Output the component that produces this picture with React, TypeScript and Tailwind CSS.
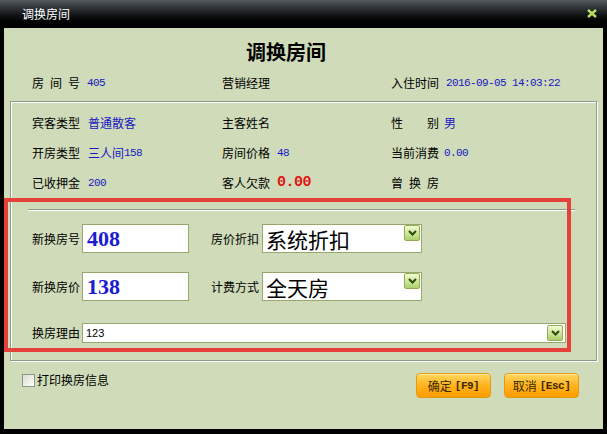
import React from "react";

const CJK = "font-['Noto_Sans_CJK_SC',sans-serif]";
const MONO = "font-['Liberation_Mono',monospace]";
const NUM = "font-['Liberation_Mono',monospace] text-[11px] tracking-[-0.6px] text-[#1717c4]";

function Spaced({ chars }: { chars: string[] }) {
  return (
    <span className="flex w-[48px] justify-between">
      {chars.map((c, i) => (
        <span key={i}>{c}</span>
      ))}
    </span>
  );
}

function DropBtn() {
  return (
    <div className="flex h-[16px] w-[16px] items-center justify-center rounded-[2px] border border-[#93ab5a] bg-gradient-to-b from-[#f3fbd0] to-[#aed067]">
      <svg width="9" height="6" viewBox="0 0 9 6">
        <path d="M1 1 L4.5 4.5 L8 1" stroke="#2c4a0c" strokeWidth="2" fill="none" />
      </svg>
    </div>
  );
}

function Btn({ zh, key2 }: { zh: string; key2: string }) {
  return (
    <div className="flex h-[25px] w-[75px] items-center justify-center rounded-[4px] border border-[#e69a10] bg-gradient-to-b from-[#ffd85a] via-[#ffb21c] to-[#ff9c00] shadow-[inset_0_1px_0_#ffe9a0]">
      <span className={`${CJK} text-[12px] leading-[14px] text-[#3a2a00]`}>{zh}</span>
      <span className={`${MONO} ml-[3px] text-[11px] font-bold leading-[14px] tracking-[-0.5px] text-[#3a2a00]`}>{key2}</span>
    </div>
  );
}

export default function App() {
  return (
    <div className={`relative flex h-[434px] w-[607px] flex-col bg-black ${CJK} text-[12px] text-black`}>
      {/* title bar */}
      <div className="flex h-[28px] items-center justify-between bg-gradient-to-b from-[#555b60] via-[#16191c] to-black pl-[22px] pr-[10px]">
        <span className="text-[12px] leading-[14px] text-white">调换房间</span>
        <svg width="10" height="9" viewBox="0 0 10 9" className="mb-[2px]">
          <path d="M1 1 L9 8 M9 1 L1 8" stroke="#b8df62" strokeWidth="2.4" />
        </svg>
      </div>

      {/* content */}
      <div className="mx-[4px] mb-[5px] flex flex-1 flex-col bg-[#cfdbb9]">
        <div className="pl-[242px] pt-[12px] text-[20px] font-bold leading-[24px]">调换房间</div>

        <div className="mt-[10px] flex h-[18px] items-center pl-[28px] leading-[18px]">
          <div className="flex w-[190px] items-center">
            <Spaced chars={["房", "间", "号"]} />
            <span className={`${NUM} ml-[7px]`}>405</span>
          </div>
          <div className="flex w-[169px] items-center">营销经理</div>
          <div className="flex items-center">
            <span>入住时间</span>
            <span className={`${NUM} ml-[7px]`}>2016-09-05 14:03:22</span>
          </div>
        </div>

        {/* group box */}
        <div className="mx-[6px] mt-[9px] flex flex-col border border-[#8f9b88] pb-[17px] shadow-[inset_1px_1px_0_#ffffff,1px_1px_0_#ffffff]">
          <div className="flex flex-col gap-[12px] pl-[21px] pt-[12px] leading-[18px]">
            <div className="flex h-[18px] items-center">
              <div className="flex w-[190px] items-center">
                <span className="w-[48px]">宾客类型</span>
                <span className="ml-[8px] text-[#1717c4]">普通散客</span>
              </div>
              <div className="w-[169px]">主客姓名</div>
              <div className="flex items-center">
                <Spaced chars={["性", "别"]} />
                <span className="ml-[5px] text-[#1717c4]">男</span>
              </div>
            </div>
            <div className="flex h-[18px] items-center">
              <div className="flex w-[190px] items-center">
                <span className="w-[48px]">开房类型</span>
                <span className="ml-[8px] text-[#1717c4]">三人间</span>
                <span className={NUM}>158</span>
              </div>
              <div className="flex w-[169px] items-center">
                <span className="w-[48px]">房间价格</span>
                <span className={`${NUM} ml-[7px]`}>48</span>
              </div>
              <div className="flex items-center">
                <span className="w-[48px]">当前消费</span>
                <span className={`${NUM} ml-[5px]`}>0.00</span>
              </div>
            </div>
            <div className="flex h-[18px] items-center">
              <div className="flex w-[190px] items-center">
                <span className="w-[48px]">已收押金</span>
                <span className={`${NUM} ml-[8px]`}>200</span>
              </div>
              <div className="flex w-[169px] items-center">
                <span className="w-[48px]">客人欠款</span>
                <span className={`${MONO} ml-[7px] text-[15px] font-bold tracking-[-0.5px] text-[#e01414]`}>0.00</span>
              </div>
              <div className="flex items-center">
                <Spaced chars={["曾", "换", "房"]} />
              </div>
            </div>
          </div>

          {/* separator */}
          <div className="ml-[17px] mt-[17px] h-[2px] w-[547px] border-b border-t border-b-white border-t-[#8f9b88]" />

          {/* inputs */}
          <div className="mt-[13px] flex flex-col pl-[21px]">
            <div className="flex h-[29px] items-center">
              <span className="w-[48px]">新换房号</span>
              <div className="ml-[2px] flex h-[29px] w-[107px] items-center border border-[#98a86c] bg-white pl-[4px]">
                <span className="font-['Liberation_Serif',serif] text-[22px] font-bold leading-[24px] text-[#1c1cd0]">408</span>
              </div>
              <span className="ml-[22px] w-[48px]">房价折扣</span>
              <div className="ml-[3px] flex h-[29px] w-[160px] items-start justify-between border border-[#98a86c] bg-white pl-[3px] pr-[1px]">
                <span className="self-center text-[21px] leading-[26px]">系统折扣</span>
                <DropBtn />
              </div>
            </div>

            <div className="mt-[19px] flex h-[29px] items-center">
              <span className="w-[48px]">新换房价</span>
              <div className="ml-[2px] flex h-[29px] w-[107px] items-center border border-[#98a86c] bg-white pl-[4px]">
                <span className="font-['Liberation_Serif',serif] text-[22px] font-bold leading-[24px] text-[#1c1cd0]">138</span>
              </div>
              <span className="ml-[22px] w-[48px]">计费方式</span>
              <div className="ml-[3px] flex h-[29px] w-[160px] items-start justify-between border border-[#98a86c] bg-white pl-[3px] pr-[1px]">
                <span className="self-center text-[21px] leading-[26px]">全天房</span>
                <DropBtn />
              </div>
            </div>

            <div className="mt-[22px] flex h-[20px] items-center">
              <span className="w-[48px]">换房理由</span>
              <div className="ml-[2px] flex h-[20px] w-[484px] items-center justify-between border border-[#98a86c] bg-white pl-[3px] pr-[2px]">
                <span className="font-['Liberation_Sans',sans-serif] text-[11px] leading-[14px]">123</span>
                <DropBtn />
              </div>
            </div>
          </div>
        </div>

        {/* footer */}
        <div className="mt-[12px] flex items-start justify-between pl-[18px] pr-[24px]">
          <div className="flex items-center">
            <div className="h-[13px] w-[13px] border border-[#8b9685] bg-gradient-to-br from-[#dcdcd4] to-white" />
            <span className="ml-[2px] leading-[14px]">打印换房信息</span>
          </div>
          <div className="flex gap-[13px]">
            <Btn zh="确定" key2="[F9]" />
            <Btn zh="取消" key2="[Esc]" />
          </div>
        </div>
      </div>

      {/* red annotation box */}
      <div className="pointer-events-none absolute left-[4px] top-[198px] h-[154px] w-[567px] border-[4px] border-[#e5413a]" />
    </div>
  );
}
